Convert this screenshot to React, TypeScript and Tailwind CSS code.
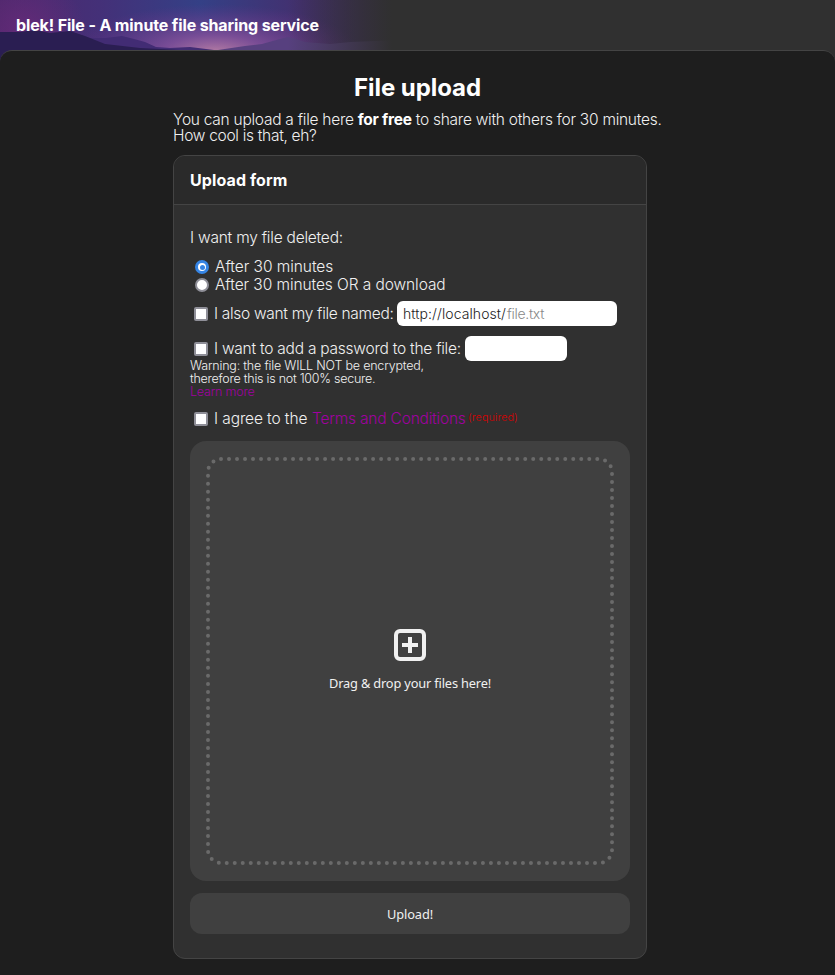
import type { ReactNode } from "react";

function Landscape() {
  return (
    <svg className="absolute left-0 top-0" width="400" height="62" viewBox="0 0 400 62" aria-hidden="true">
      <defs>
        <linearGradient id="sky" x1="0" y1="0" x2="1" y2="0">
          <stop offset="0" stopColor="#4c286c" />
          <stop offset="0.25" stopColor="#443078" />
          <stop offset="0.5" stopColor="#344086" />
          <stop offset="0.75" stopColor="#43306f" />
          <stop offset="1" stopColor="#3c2b50" />
        </linearGradient>
        <radialGradient id="glow" gradientUnits="userSpaceOnUse" cx="215" cy="52" r="48" gradientTransform="translate(-430 0) scale(3 1)">
          <stop offset="0" stopColor="#b47ca4" />
          <stop offset="0.35" stopColor="#84509a" stopOpacity="0.85" />
          <stop offset="1" stopColor="#6b3187" stopOpacity="0" />
        </radialGradient>
        <radialGradient id="leftGlow" gradientUnits="userSpaceOnUse" cx="25" cy="32" r="60">
          <stop offset="0" stopColor="#6e2b7c" stopOpacity="0.7" />
          <stop offset="1" stopColor="#6e2b7c" stopOpacity="0" />
        </radialGradient>
        <linearGradient id="fade" x1="0" y1="0" x2="1" y2="0">
          <stop offset="0.72" stopColor="#303030" stopOpacity="0" />
          <stop offset="0.98" stopColor="#303030" />
        </linearGradient>
      </defs>
      <rect width="400" height="62" fill="url(#sky)" />
      <rect width="400" height="62" fill="url(#leftGlow)" />
      <rect width="400" height="62" fill="url(#glow)" />
      <path d="M218 50L245 46L262 44L280 39L288 37L296 39L305 42L330 44L350 42L400 40V62H218Z" fill="#57407f" />
      <path d="M70 34L90 38L106 38L122 36L134 39L145 42L156 47L170 48L190 47L214 50V62H70Z" fill="#422c74" />
      <path d="M0 32L20 32L35 30L50 33L70 31L85 36L105 44L140 48L180 50V62H0Z" fill="#2a1e52" />
      <rect width="400" height="62" fill="url(#fade)" />
    </svg>
  );
}

function Radio({ checked = false }: { checked?: boolean }) {
  return checked ? (
    <span className="ml-[5px] mr-[6px] flex size-[14px] shrink-0 items-center justify-center rounded-full border-[3px] border-[#3584e4] bg-white">
      <span className="size-[5px] rounded-full bg-[#3584e4]" />
    </span>
  ) : (
    <span className="ml-[5px] mr-[6px] size-[14px] shrink-0 rounded-full border-2 border-[#8f8f98] bg-white" />
  );
}

function Checkbox() {
  return <span className="ml-1 mr-[6px] size-[14px] shrink-0 rounded-[2px] border-2 border-[#8f8f98] bg-white" />;
}

function Row({ children, className }: { children: ReactNode; className: string }) {
  return <div className={`flex items-center whitespace-nowrap ${className}`}>{children}</div>;
}

export default function App() {
  return (
    <div className="h-[975px] w-full overflow-hidden bg-[#303030] font-['Inter','Noto_Sans',sans-serif] text-[15.5px] font-light leading-4 text-[#f0f0f0]">
      <header className="relative h-[50px]">
        <Landscape />
        <div className="relative flex h-[50px] items-center pl-4">
          <b className="whitespace-nowrap text-[16px] font-bold tracking-[-0.13px] text-white">blek! File - A minute file sharing service</b>
        </div>
      </header>
      <main className="relative flex h-[925px] flex-col items-center rounded-t-[12px] border-t border-[#444] bg-[#1e1e1e]">
        <h1 className="mt-[21px] whitespace-nowrap text-[24px] font-bold leading-8 tracking-[-0.05px] text-white">File upload</h1>
        <div className="mt-[8px] w-[489px]">
          <p className="whitespace-nowrap tracking-[-0.26px]">
            You can upload a file here <b className="font-bold text-white">for free</b> to share with others for 30 minutes.
          </p>
          <p className="tracking-[-0.3px]">How cool is that, eh?</p>
          <section className="mt-[11px] h-[804px] w-[474px] overflow-hidden rounded-[12px] border border-[#444] bg-[#303030]">
            <div className="flex h-[49px] items-center border-b border-[#444] bg-[#2a2a2a] pl-4">
              <h2 className="text-[16px] font-bold tracking-[0.1px] text-white">Upload form</h2>
            </div>
            <div className="flex flex-col px-4 pt-[24px]">
              <Row className="h-[18px] tracking-[-0.22px]"><span>I want my file deleted:</span></Row>
              <Row className="mt-[11px] h-[18px] tracking-[-0.05px]"><Radio checked /><span>After 30 minutes</span></Row>
              <Row className="h-[18px] tracking-[-0.08px]"><Radio /><span>After 30 minutes OR a download</span></Row>
              <Row className="mt-[7px] h-[25px] tracking-[-0.3px]">
                <Checkbox /><span className="w-[183px]">I also want my file named:</span>
                <span className="flex h-[25px] w-[220px] items-center rounded-[6px] bg-white pl-[6px] text-[14px] text-[#222]">
                  <span className="w-[104px] tracking-[0.08px]">http://localhost/</span><span className="text-[#888]">file.txt</span>
                </span>
              </Row>
              <Row className="mt-[10px] h-[25px] tracking-[-0.24px]">
                <Checkbox /><span className="w-[251px]">I want to add a password to the file:</span>
                <span className="h-[25px] w-[102px] rounded-[6px] bg-white" />
              </Row>
              <div className="-mt-[2px] whitespace-nowrap text-[12.5px] leading-[13px] tracking-[-0.2px]">
                <p>Warning: the file WILL NOT be encrypted,</p>
                <p className="tracking-[-0.25px]">therefore this is not 100% secure.</p>
                <p className="text-[#a000a0]">Learn more</p>
              </div>
              <Row className="mt-[12px] h-[18px] tracking-[-0.2px]">
                <Checkbox /><span className="w-[98px] tracking-[-0.1px]">I agree to the</span><span className="w-[156px] text-[#a000a0]">Terms and Conditions</span>
                <span className="pb-[3px] text-[10.7px] tracking-[0.1px] text-[#d80000]">(required)</span>
              </Row>
              <div className="mt-[13px] h-[440px] rounded-[16px] bg-[#404040] p-4">
                <div className="relative flex h-full flex-col items-center justify-center font-['Noto_Sans',sans-serif]">
                  <svg className="absolute left-0 top-0" width="408" height="408" viewBox="0 0 408 408" fill="none">
                    <rect x="2" y="2" width="404" height="404" rx="13" stroke="#6a6a6a" strokeWidth="4" strokeLinecap="round" strokeDasharray="0 8" pathLength="1592" />
                  </svg>
                  <svg className="-mt-[2px]" width="32" height="32" viewBox="0 0 32 32" fill="none" stroke="#f0f0f0" strokeWidth="4">
                    <rect x="2" y="2" width="28" height="28" rx="4" />
                    <path d="M16 8V24M8 16H24" />
                  </svg>
                  <p className="mt-[14px] text-[12.8px] font-normal leading-4 tracking-[-0.16px]">Drag &amp; drop your files here!</p>
                </div>
              </div>
              <button className="mt-[12px] h-[41px] rounded-[12px] bg-[#404040] font-['Noto_Sans',sans-serif] text-[12.8px] font-normal tracking-[-0.1px]">Upload!</button>
            </div>
          </section>
        </div>
      </main>
    </div>
  );
}
